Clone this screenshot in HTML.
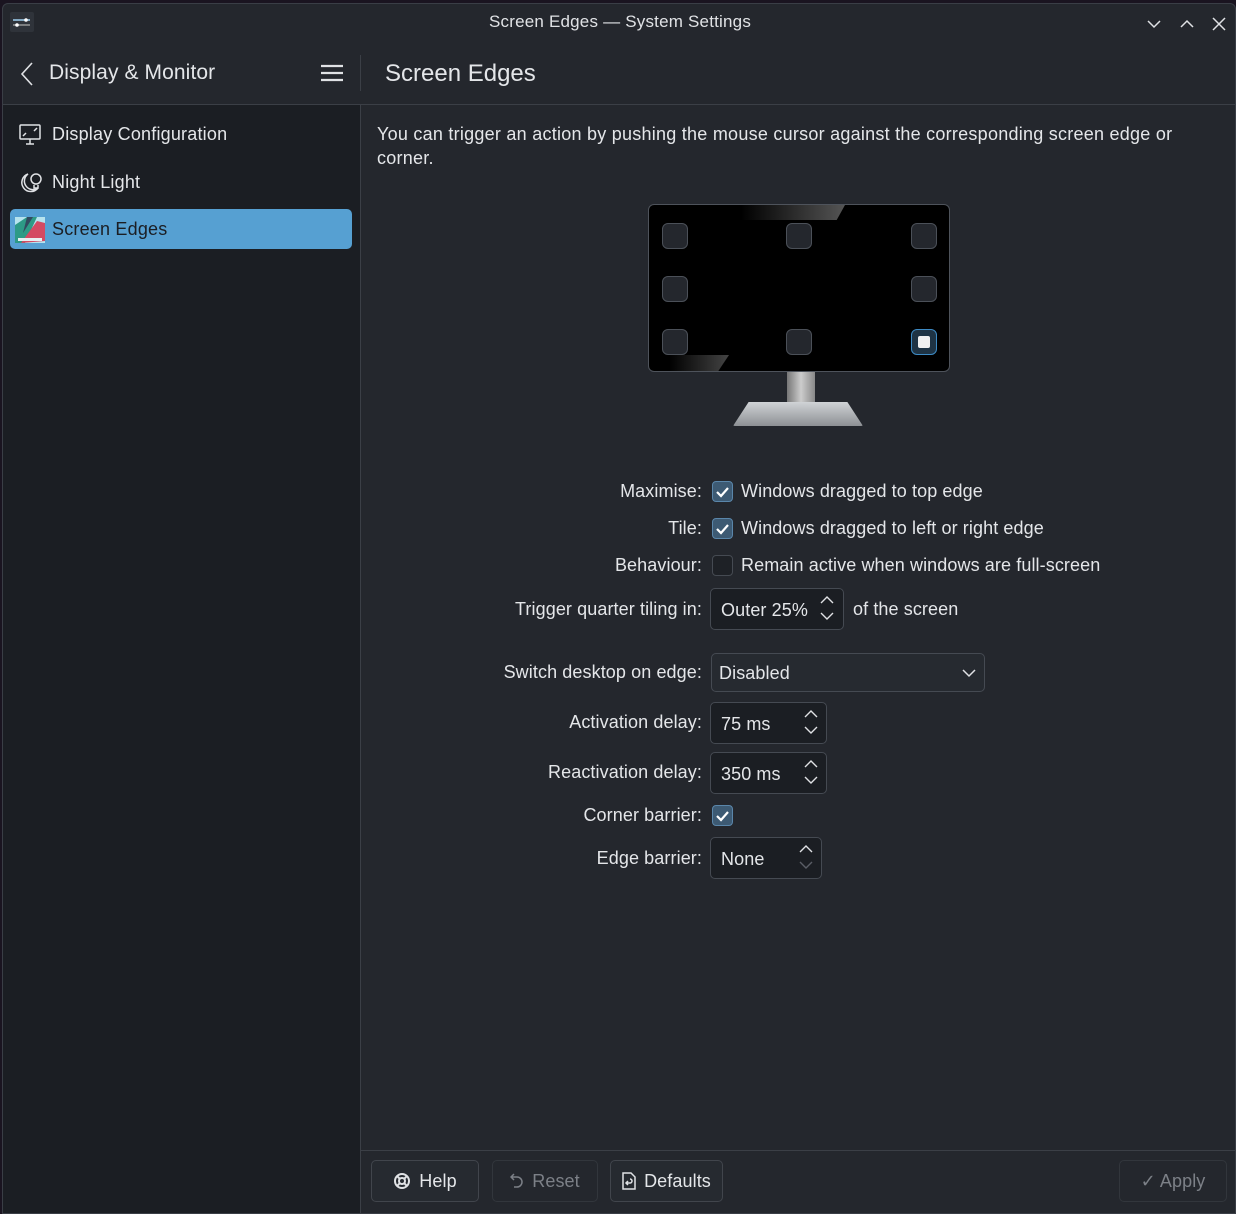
<!DOCTYPE html>
<html><head><meta charset="utf-8"><style>
*{margin:0;padding:0;box-sizing:border-box}
body{width:1236px;height:1214px;background:#1a1420;font-family:"Liberation Sans","DejaVu Sans",sans-serif;color:#e4e6e9;font-size:18px;letter-spacing:0.1px;position:relative;overflow:hidden}
.win{position:absolute;left:2px;top:3px;width:1234px;height:1211px;background:#24272d;border-radius:6px 6px 0 0;border:1px solid #3a3e46;overflow:hidden}
.abs{position:absolute}
.side{position:absolute;left:0;top:101px;width:358px;height:1110px;background:#1b1e23;border-right:1px solid #3b3f46}
.hdr{position:absolute;left:0;top:39px;width:1234px;height:62px;border-bottom:1px solid #3b3f46;background:#24272d}
.item{position:absolute;left:49px;font-size:18px;letter-spacing:0.2px}
.lbl{position:absolute;right:533px;text-align:right}
.box{position:absolute;border:1px solid #454a52;border-radius:5px;background:#1b1e23}
.cb{position:absolute;width:21px;height:21px;border-radius:4px;border:1px solid #454a52;background:#1e2126}
.cb.on{background:#3d5a73;border-color:#5a86aa}
.btn{position:absolute;top:1156px;height:42px;border:1px solid #41454c;border-radius:5px;background:#262a30;font-size:18px;display:flex;align-items:center;justify-content:center;gap:8px}
.sq{position:absolute;width:26px;height:26px;border:1px solid #4b5058;border-radius:6px;background:#24272d}
</style></head><body>
<div class="win">
 <svg class="abs" style="left:7px;top:8px" width="24" height="20"><rect width="24" height="20" rx="2" fill="#2f333a"/><line x1="3" y1="8" x2="20" y2="8" stroke="#9fd0f0" stroke-width="1.4"/><circle cx="16" cy="8" r="1.8" fill="#fff"/><line x1="3" y1="13" x2="20" y2="13" stroke="#aaa" stroke-width="1.2"/><circle cx="7" cy="13" r="1.8" fill="#fff"/></svg>
 <div class="abs" style="left:0;width:1234px;top:8px;text-align:center;font-size:17px;letter-spacing:0.2px;color:#e0e2e5">Screen Edges — System Settings</div>
 <svg class="abs" style="left:1142px;top:12px" width="86" height="16" fill="none" stroke="#e0e2e5" stroke-width="1.5"><path d="M3 5l6 6 6-6"/><path d="M36 11l6-6 6 6"/><path d="M68 2l12 12M80 2l-12 12"/></svg>
 <div class="hdr">
  <svg class="abs" style="left:17px;top:19px" width="14" height="24" fill="none" stroke="#e0e2e5" stroke-width="1.6"><path d="M12 1L2 12l10 11"/></svg>
  <div class="abs" style="left:46px;top:18px;font-size:21px">Display &amp; Monitor</div>
  <svg class="abs" style="left:318px;top:21px" width="22" height="18" stroke="#e0e2e5" stroke-width="2.2"><path d="M0 2h22M0 9h22M0 16h22"/></svg>
  <div class="abs" style="left:357px;top:12px;width:1px;height:36px;background:#3b3f46"></div>
  <div class="abs" style="left:382px;top:17px;font-size:24px;letter-spacing:0">Screen Edges</div>
 </div>
 <div class="side">
  <svg class="abs" style="left:15px;top:18px" width="24" height="24" fill="none" stroke="#e0e2e5" stroke-width="1.5"><rect x="2" y="2" width="20" height="14" rx="1"/><path d="M8 21h8M12 16v5"/><path d="M19 5l-3 3M5 13l3-3" /></svg>
  <div class="item" style="top:19px">Display Configuration</div>
  <svg class="abs" style="left:15px;top:66px" width="26" height="24" fill="none" stroke="#e0e2e5" stroke-width="1.5"><path d="M10 3a9 9 0 1 0 10 14A8 8 0 0 1 10 3z"/><circle cx="18" cy="8" r="5"/><path d="M16 14v3h4v-3"/></svg>
  <div class="item" style="top:67px">Night Light</div>
  <div class="abs" style="left:7px;top:104px;width:342px;height:40px;background:#56a0d2;border-radius:5px"></div>
  <svg class="abs" style="left:12px;top:112px" width="30" height="26"><rect width="30" height="26" fill="#b6e3ee"/><path d="M0 8L12 0h10L10 26H0z" fill="#2d9a86"/><path d="M6 26L22 4l8 2v18z" fill="#d44a63"/><path d="M12 0h6L8 16z" fill="#324a5f"/><rect x="3" y="21" width="24" height="3" fill="#e8f0f3"/></svg>
  <div class="item" style="top:114px;color:#1b1e23">Screen Edges</div>
 </div>
 <div class="abs" style="left:374px;top:118px;width:810px;line-height:24px;letter-spacing:0.25px">You can trigger an action by pushing the mouse cursor against the corresponding screen edge or corner.</div>
 <div class="abs" style="left:645px;top:200px;width:302px;height:168px;background:#000;border:1px solid #4e535b;border-radius:6px;overflow:hidden">
  <div class="abs" style="left:92px;top:0;width:104px;height:15px;background:linear-gradient(90deg,#000,#555);clip-path:polygon(0 0,100% 0,92% 100%,0 100%)"></div>
  <div class="abs" style="left:20px;top:150px;width:60px;height:18px;background:linear-gradient(90deg,#000,#444);clip-path:polygon(0 0,100% 0,80% 100%,0 100%)"></div>
 </div>
 <div class="sq" style="left:659px;top:219px"></div><div class="sq" style="left:783px;top:219px"></div><div class="sq" style="left:908px;top:219px"></div>
 <div class="sq" style="left:659px;top:272px"></div><div class="sq" style="left:908px;top:272px"></div>
 <div class="sq" style="left:659px;top:325px"></div><div class="sq" style="left:783px;top:325px"></div>
 <div class="sq" style="left:908px;top:325px;border-color:#3d8ac4;background:#1e3344"><div style="position:absolute;left:6px;top:6px;width:12px;height:12px;background:#f0f0f0;border-radius:2px"></div></div>
 <div class="abs" style="left:784px;top:368px;width:28px;height:36px;background:linear-gradient(90deg,#777,#ccc,#888)"></div>
 <div class="abs" style="left:730px;top:398px;width:130px;height:24px;background:linear-gradient(#d0d3d6,#8d9094);clip-path:polygon(12% 0,88% 0,100% 100%,0 100%);border-radius:2px"></div>

 <div class="lbl" style="top:477px">Maximise:</div>
 <div class="cb on" style="left:709px;top:477px"><svg width="19" height="19" fill="none" stroke="#fff" stroke-width="2.2"><path d="M4 10l4 4 7-8"/></svg></div>
 <div class="abs" style="left:738px;top:477px">Windows dragged to top edge</div>
 <div class="lbl" style="top:514px">Tile:</div>
 <div class="cb on" style="left:709px;top:514px"><svg width="19" height="19" fill="none" stroke="#fff" stroke-width="2.2"><path d="M4 10l4 4 7-8"/></svg></div>
 <div class="abs" style="left:738px;top:514px">Windows dragged to left or right edge</div>
 <div class="lbl" style="top:551px">Behaviour:</div>
 <div class="cb" style="left:709px;top:551px"></div>
 <div class="abs" style="left:738px;top:551px">Remain active when windows are full-screen</div>

 <div class="lbl" style="top:595px">Trigger quarter tiling in:</div>
 <div class="box" style="left:707px;top:584px;width:134px;height:42px"><span class="abs" style="left:10px;top:11px">Outer 25%</span></div>
 <div class="abs" style="left:850px;top:595px">of the screen</div>

 <div class="lbl" style="top:658px">Switch desktop on edge:</div>
 <div class="box" style="left:708px;top:649px;width:274px;height:39px;background:#262a30"><span class="abs" style="left:7px;top:9px">Disabled</span>
 <svg class="abs" style="left:250px;top:14px" width="14" height="10" fill="none" stroke="#e0e2e5" stroke-width="1.5"><path d="M1 2l6 6 6-6"/></svg></div>

 <div class="lbl" style="top:708px">Activation delay:</div>
 <div class="box" style="left:707px;top:698px;width:117px;height:42px"><span class="abs" style="left:10px;top:11px">75 ms</span></div>
 <div class="lbl" style="top:758px">Reactivation delay:</div>
 <div class="box" style="left:707px;top:748px;width:117px;height:42px"><span class="abs" style="left:10px;top:11px">350 ms</span></div>
 <div class="lbl" style="top:801px">Corner barrier:</div>
 <div class="cb on" style="left:709px;top:801px"><svg width="19" height="19" fill="none" stroke="#fff" stroke-width="2.2"><path d="M4 10l4 4 7-8"/></svg></div>
 <div class="lbl" style="top:844px">Edge barrier:</div>
 <div class="box" style="left:707px;top:833px;width:112px;height:42px"><span class="abs" style="left:10px;top:11px">None</span></div>

 <svg class="abs" style="left:816px;top:590px" width="16" height="30" fill="none" stroke="#e0e2e5" stroke-width="1.4"><path d="M2 9l6-6 6 6M2 19l6 6 6-6"/></svg>
 <svg class="abs" style="left:800px;top:704px" width="16" height="30" fill="none" stroke="#e0e2e5" stroke-width="1.4"><path d="M2 9l6-6 6 6M2 19l6 6 6-6"/></svg>
 <svg class="abs" style="left:800px;top:754px" width="16" height="30" fill="none" stroke="#e0e2e5" stroke-width="1.4"><path d="M2 9l6-6 6 6M2 19l6 6 6-6"/></svg>
 <svg class="abs" style="left:795px;top:839px" width="16" height="30" fill="none" stroke-width="1.4"><path d="M2 9l6-6 6 6" stroke="#e0e2e5"/><path d="M2 19l6 6 6-6" stroke="#5a5e66"/></svg>

 <div class="abs" style="left:357px;top:1146px;width:877px;height:1px;background:#3b3f46"></div>
 <div class="btn" style="left:368px;width:108px"><svg width="18" height="18" fill="none" stroke="#e0e2e5" stroke-width="2"><circle cx="9" cy="9" r="7"/><circle cx="9" cy="9" r="3"/><path d="M4 4l3 3M14 4l-3 3M4 14l3-3M14 14l-3-3"/></svg>Help</div>
 <div class="btn" style="left:489px;width:106px;color:#7c8087;border-color:#32363c;background:#24272d"><svg width="14" height="18" fill="none" stroke="#7c8087" stroke-width="1.5"><path d="M4 2L1 5l3 3M1 5h6a5 5 0 0 1 0 10H4"/></svg>Reset</div>
 <div class="btn" style="left:607px;width:113px"><svg width="14" height="18" fill="none" stroke="#e0e2e5" stroke-width="1.5"><path d="M1 1h8l4 4v12H1z"/><path d="M6 9l-2 2 2 2M4 11h4a2 2 0 0 0 0-4"/></svg>Defaults</div>
 <div class="btn" style="left:1116px;width:108px;color:#7c8087;border-color:#32363c;background:#24272d">✓ Apply</div>
</div>
</body></html>
